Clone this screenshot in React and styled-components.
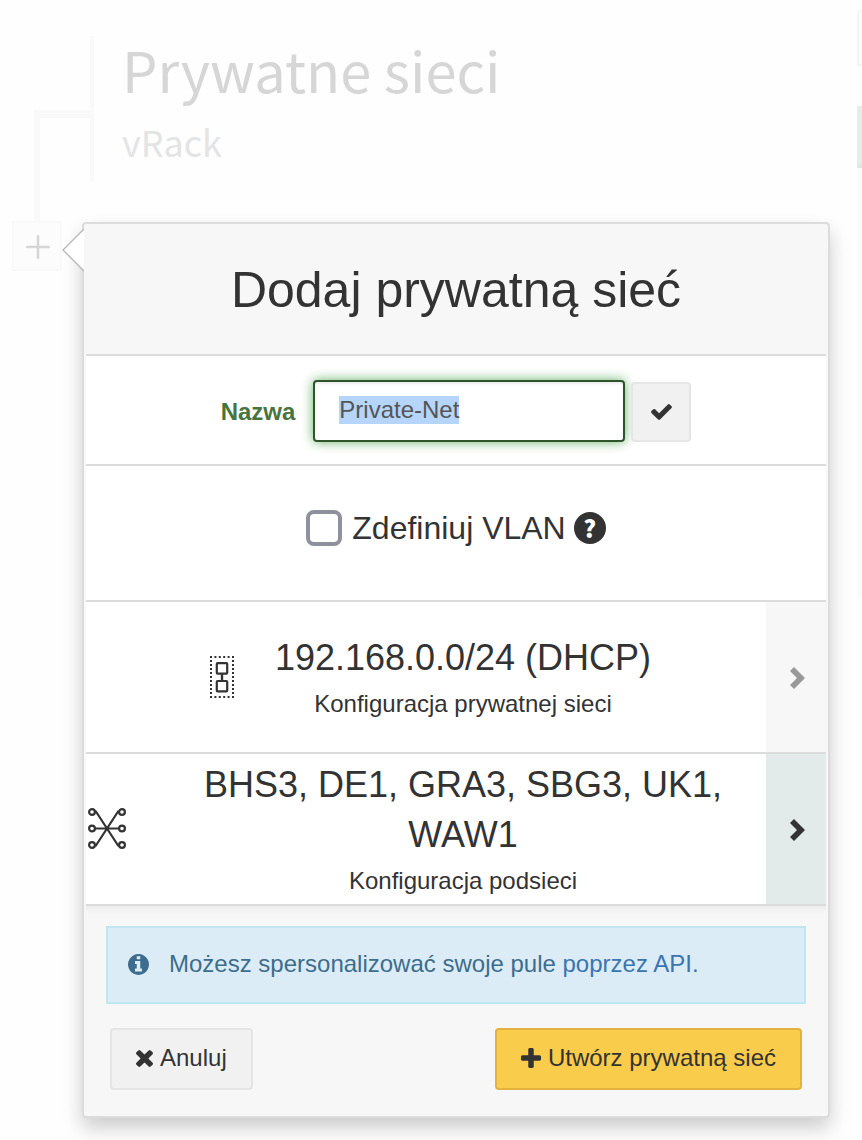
import React, { useEffect, useRef } from "react";
import styled, { createGlobalStyle } from "styled-components";

const GlobalStyle = createGlobalStyle`
  *, *::before, *::after { box-sizing: border-box; }
  body {
    margin: 0;
    background: #fefefe;
    color: #333;
    font-family: "Helvetica Neue", "Liberation Sans", Arial, sans-serif;
    font-size: 24px;
    line-height: 34px;
  }
  h1, h2, h3, p { margin: 0; font-weight: 400; }
  button, input { font: inherit; color: inherit; }
`;

const Page = styled.div`
  display: grid;
  grid-template-columns: minmax(0, 1fr) 5px;
  column-gap: 27px;
  min-height: 100vh;
  overflow: hidden;
`;

const Main = styled.main`
  padding-bottom: 22px;
`;

/* Faded network diagram behind the popover */
const DiagramHead = styled.header`
  display: flex;
  height: 221px;
`;

const Connector = styled.div`
  width: 56px;
  margin: 110px 0 0 34px;
  border-top: 8px solid #f9f9f9;
  border-left: 6px solid #f9f9f9;
`;

const NetworkHeading = styled.div`
  height: 145px;
  margin-top: 36px;
  padding-left: 28px;
  border-left: 4px solid #f9f9f9;
  font-family: "Source Sans Pro", "Noto Sans CJK SC", "Noto Sans", sans-serif;
`;

const NetworkName = styled.h1`
  color: #d6d6d6;
  font-size: 56px;
  line-height: 66px;
`;

const NetworkKind = styled.p`
  color: #e4e4e4;
  font-size: 36px;
  line-height: 78px;
`;

const Workspace = styled.div`
  display: flex;
  align-items: flex-start;
  gap: 20px;
  padding-left: 12px;
`;

const AddNode = styled.button`
  display: grid;
  flex: none;
  place-items: center;
  width: 50px;
  height: 50px;
  padding: 2px 0 0 2px;
  border: 2px solid #f9f9f9;
  background: #fcfcfc;
  color: #d6d6d6;
`;

const SideColumn = styled.aside`
  padding-top: 10px;
`;

const SideBox = styled.div`
  height: 56px;
  border: 2px solid #f5f5f5;
  border-right: 0;
  background: #fbfbfb;
`;

const SideTab = styled.div`
  height: 62px;
  margin-top: 40px;
  border-bottom: 4px solid #dceae6;
  background: #e3eeeb;
`;

const SideLine = styled.div`
  height: 430px;
  background: #fbfbfb;
`;

/* Popover */
const Popover = styled.section`
  position: relative;
  flex: 1;
  min-width: 0;
  margin-top: 1px;
  padding: 2px;
  border: 2px solid #dcdcdc;
  border-radius: 4px;
  background: #f7f7f7;
  box-shadow: 0 10px 20px rgba(0, 0, 0, 0.2);
`;

const PopoverArrow = styled.svg`
  position: absolute;
  top: 4px;
  left: -22px;
`;

const PopoverTitle = styled.h2`
  padding: 34px 0;
  border-bottom: 2px solid #dcdcdc;
  font-size: 50px;
  line-height: 60px;
  text-align: center;
`;

const Row = styled.div`
  display: flex;
  justify-content: center;
  border-bottom: 2px solid #dcdcdc;
  background: #fff;
`;

const NameForm = styled(Row)`
  align-items: flex-end;
  padding: 24px 0 22px;
`;

const NameLabel = styled.label`
  margin-right: 18px;
  color: #48753d;
  font-weight: 700;
  line-height: 60px;
`;

const NameInput = styled.input`
  width: 312px;
  height: 62px;
  margin-right: 6px;
  padding: 0 24px 2px;
  border: 2px solid #2f542c;
  border-radius: 4px;
  outline: 0;
  background: #fff;
  box-shadow: inset 0 2px 2px rgba(0, 0, 0, 0.08), 0 0 12px #67b168;
  color: #555;
  line-height: 30px;

  &::selection {
    background: #b6d5fb;
    color: #555;
  }
`;

const Button = styled.button`
  display: flex;
  align-items: center;
  justify-content: center;
  gap: 7px;
  height: ${(p) => (p.$square ? "60px" : "62px")};
  width: ${(p) => (p.$square ? "60px" : "auto")};
  padding: ${(p) => (p.$square ? "0" : "0 24px 2px")};
  border: 2px solid ${(p) => (p.$primary ? "#e2b33e" : "#e5e5e5")};
  border-radius: 4px;
  background: ${(p) => (p.$primary ? "#f9cc4b" : "#f1f1f1")};
  color: #333;
  white-space: nowrap;
  cursor: pointer;
`;

const VlanRow = styled(Row)`
  align-items: center;
  gap: 8px;
  padding: 38px 0 48px;
`;

const VlanLabel = styled.label`
  display: flex;
  align-items: center;
  gap: 10px;
  font-size: 32px;
  line-height: 48px;
`;

const Checkbox = styled.input`
  appearance: none;
  width: 36px;
  height: 36px;
  margin: 0;
  border: 4px solid #8e919e;
  border-radius: 8px;
  background: #fff;

  &:checked { background: #8e919e; }
`;

const HelpButton = styled.button`
  width: 32px;
  height: 32px;
  padding: 0;
  border: 0;
  border-radius: 50%;
  background: #333;
  color: #fff;
  font-family: "Noto Sans CJK SC", "Noto Sans", sans-serif;
  font-weight: 900;
  line-height: 32px;
`;

const OptionRow = styled(Row)`
  height: 152px;
`;

const OptionBody = styled.div`
  display: flex;
  flex: 1;
  align-items: center;
  justify-content: center;
  min-width: 0;
`;

const OptionIcon = styled.span`
  display: grid;
  flex: none;
  place-items: center;
  width: 42px;
  margin-right: 32px;
`;

const OptionText = styled.div`
  padding-top: 4px;
  text-align: center;
`;

const OptionTitle = styled.h3`
  font-size: 36px;
  line-height: 50px;
`;

const OptionNote = styled.p`
  line-height: 42px;
`;

const OptionNext = styled.button`
  display: grid;
  flex: none;
  place-items: center;
  width: 60px;
  padding: 2px 0 0 2px;
  border: 0;
  background: ${(p) => (p.$active ? "#e2ebe9" : "#f7f7f7")};
  color: ${(p) => (p.$active ? "#333" : "#999")};
  cursor: pointer;
`;

const Footer = styled.footer`
  padding: 20px 20px 24px;
  box-shadow: inset 0 10px 10px -10px rgba(0, 0, 0, 0.1);
`;

const Notice = styled.p`
  display: flex;
  align-items: center;
  gap: 20px;
  height: 78px;
  padding: 0 20px 2px;
  border: 2px solid #c0e7ef;
  background: #dbecf6;
  color: #3d6d8c;
`;

const NoticeLink = styled.a`
  color: #3a75b0;
  text-decoration: none;
`;

const Actions = styled.div`
  display: flex;
  justify-content: space-between;
  padding: 24px 4px 0;
`;

const ICONS = {
  check: {
    box: "121 270 1550 1188",
    size: [21, 16],
    d: "M1671 502q0 40-28 68l-724 724-136 136q-28 28-68 28t-68-28l-136-136-362-362q-28-28-28-68t28-68l136-136q28-28 68-28t68 28l294 295 656-657q28-28 68-28t68 28l136 136q28 28 28 68z",
  },
  times: {
    box: "302 302 1188 1188",
    size: [17, 17],
    d: "M1490 1258q0 40-28 68l-136 136q-28 28-68 28t-68-28l-294-294-294 294q-28 28-68 28t-68-28l-136-136q-28-28-28-68t28-68l294-294-294-294q-28-28-28-68t28-68l136-136q28-28 68-28t68 28l294 294 294-294q28-28 68-28t68 28l136 136q28 28 28 68t-28 68l-294 294 294 294q28 28 28 68z",
  },
  plus: {
    box: "192 128 1408 1408",
    size: [20, 20],
    d: "M1600 736v192q0 40-28 68t-68 28h-416v416q0 40-28 68t-68 28h-192q-40 0-68-28t-28-68v-416h-416q-40 0-68-28t-28-68v-192q0-40 28-68t68-28h416v-416q0-40 28-68t68-28h192q40 0 68 28t28 68v416h416q40 0 68 28t28 68z",
  },
  info: {
    box: "128 128 1536 1536",
    size: [21, 21],
    d: "M1152 1376v-160q0-14-9-23t-23-9h-96v-512q0-14-9-23t-23-9h-320q-14 0-23 9t-9 23v160q0 14 9 23t23 9h96v320h-96q-14 0-23 9t-9 23v160q0 14 9 23t23 9h448q14 0 23-9t9-23zm-128-896v-160q0-14-9-23t-23-9h-192q-14 0-23 9t-9 23v160q0 14 9 23t23 9h192q14 0 23-9t9-23zm640 416q0 209-103 385.5t-279.5 279.5-385.5 103-385.5-103-279.5-279.5-103-385.5 103-385.5 279.5-279.5 385.5-103 385.5 103 279.5 279.5 103 385.5z",
  },
  chevron: {
    box: "0 0 15 22",
    size: [15, 22],
    d: "M0 18L7 11 0 4 4 0 15 11 4 22z",
  },
};

function Icon({ name }) {
  const { box, size, d } = ICONS[name];
  return (
    <svg width={size[0]} height={size[1]} viewBox={box} fill="currentColor" stroke="none" aria-hidden="true">
      <path d={d} />
    </svg>
  );
}

function NetworkIcon() {
  return (
    <svg width="24" height="42" viewBox="0 0 24 42" fill="none" stroke="currentColor" strokeWidth="2" aria-hidden="true">
      <path d="M0 1H24M0 41H24" strokeDasharray="2 2.4" />
      <path d="M1 0V42M23 0V42" strokeDasharray="2 2" />
      <rect x="6.8" y="7.2" width="10.4" height="10.4" rx="0.8" strokeWidth="2.2" />
      <rect x="6.8" y="25" width="10.4" height="10.4" rx="0.8" strokeWidth="2.2" />
      <path d="M12 18V25" strokeWidth="2.4" />
    </svg>
  );
}

function SubnetIcon() {
  const nodes = [4, 20.5, 37];
  return (
    <svg width="38" height="42" viewBox="0 0 38 42" fill="none" stroke="currentColor" strokeWidth="2.2" aria-hidden="true">
      {nodes.map((y) => (
        <g key={y}>
          <circle cx="4" cy={y} r="2.9" />
          <circle cx="34" cy={y} r="2.9" />
        </g>
      ))}
      <path d="M7 20.5H31M6.5 3.6H8L30 37.4H31.5M31.5 3.6H30L8 37.4H6.5" strokeWidth="2" />
      <circle cx="19" cy="20.5" r="2" fill="currentColor" stroke="none" />
    </svg>
  );
}

function Option({ icon, title, note, active }) {
  return (
    <OptionRow>
      <OptionBody>
        <OptionIcon>{icon}</OptionIcon>
        <OptionText>
          <OptionTitle>{title}</OptionTitle>
          <OptionNote>{note}</OptionNote>
        </OptionText>
      </OptionBody>
      <OptionNext type="button" aria-label={note} $active={active}>
        <Icon name="chevron" />
      </OptionNext>
    </OptionRow>
  );
}

export default function App() {
  const nameRef = useRef(null);

  useEffect(() => {
    nameRef.current.focus();
    nameRef.current.select();
  }, []);

  return (
    <>
      <GlobalStyle />
      <Page>
        <Main>
          <DiagramHead>
            <Connector />
            <NetworkHeading>
              <NetworkName>Prywatne sieci</NetworkName>
              <NetworkKind>vRack</NetworkKind>
            </NetworkHeading>
          </DiagramHead>
          <Workspace>
            <AddNode type="button" aria-label="Dodaj">
              <svg width="24" height="24" viewBox="0 0 24 24" stroke="currentColor" strokeWidth="2.6" strokeLinecap="round" aria-hidden="true">
                <path d="M12 1.3V22.7M1.3 12H22.7" />
              </svg>
            </AddNode>
            <Popover>
              <PopoverArrow width="22" height="44" viewBox="0 0 22 44" aria-hidden="true">
                <path d="M22 1L1 22 22 43z" fill="#fff" />
                <path d="M22 1L1 22 22 43" fill="none" stroke="#b9b9b9" strokeWidth="1.4" />
              </PopoverArrow>
              <PopoverTitle>Dodaj prywatną sieć</PopoverTitle>
              <NameForm>
                <NameLabel htmlFor="network-name">Nazwa</NameLabel>
                <NameInput id="network-name" ref={nameRef} type="text" defaultValue="Private-Net" />
                <Button type="button" aria-label="Zatwierdź" $square>
                  <Icon name="check" />
                </Button>
              </NameForm>
              <VlanRow>
                <VlanLabel>
                  <Checkbox type="checkbox" />
                  Zdefiniuj VLAN
                </VlanLabel>
                <HelpButton type="button">?</HelpButton>
              </VlanRow>
              <Option icon={<NetworkIcon />} title="192.168.0.0/24 (DHCP)" note="Konfiguracja prywatnej sieci" />
              <Option icon={<SubnetIcon />} title="BHS3, DE1, GRA3, SBG3, UK1, WAW1" note="Konfiguracja podsieci" active />
              <Footer>
                <Notice>
                  <Icon name="info" />
                  <span>
                    Możesz spersonalizować swoje pule <NoticeLink href="#api">poprzez API.</NoticeLink>
                  </span>
                </Notice>
                <Actions>
                  <Button type="button">
                    <Icon name="times" />
                    Anuluj
                  </Button>
                  <Button type="button" $primary>
                    <Icon name="plus" />
                    Utwórz prywatną sieć
                  </Button>
                </Actions>
              </Footer>
            </Popover>
          </Workspace>
        </Main>
        <SideColumn>
          <SideBox />
          <SideTab />
          <SideLine />
        </SideColumn>
      </Page>
    </>
  );
}
